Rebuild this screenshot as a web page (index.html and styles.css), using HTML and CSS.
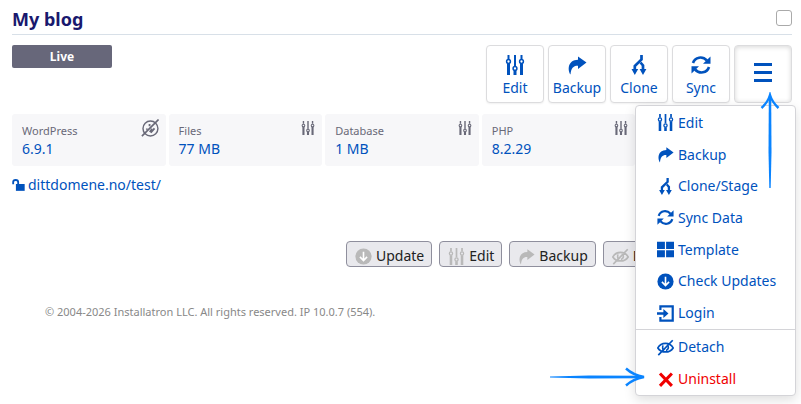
FILE: index.html
```html
<!DOCTYPE html>
<html lang="en">
<head>
  <meta charset="UTF-8">
  <title>My blog</title>
  <link rel="stylesheet" href="styles.css">
</head>
<body>

<!-- Icon set -->
<svg class="sprite" aria-hidden="true">
  <symbol id="i-sliders" viewBox="0 0 20 20">
    <path d="M3.5 0v4M10 0v11M16.5 0v4" stroke="currentColor" stroke-width="2" fill="none"/>
    <path d="M3.5 8.500v11.500M10 15.500v4.500M16.500 8.500v11.500" stroke="currentColor" stroke-width="3" fill="none"/>
    <circle cx="3.500" cy="6.500" r="1.900" fill="none" stroke="currentColor" stroke-width="1.500"/>
    <circle cx="10" cy="13.500" r="1.900" fill="none" stroke="currentColor" stroke-width="1.500"/>
    <circle cx="16.500" cy="6.500" r="1.900" fill="none" stroke="currentColor" stroke-width="1.500"/>
  </symbol>
  <symbol id="i-share" viewBox="0 0 20 20">
    <path d="M11 1.5L19.500 7.500L11 14V10.700C6.500 10.500 4 13 3.500 19.500C.5 15 .5 5 11 4.700Z" fill="currentColor"/>
  </symbol>
  <symbol id="i-clone" viewBox="0 0 20 20">
    <path d="M12.500 0V4.500L5.800 11V15" fill="none" stroke="currentColor" stroke-width="2.700"/>
    <path d="M11.500 7.500L14 10.500V15" fill="none" stroke="currentColor" stroke-width="2.700"/>
    <path d="M2.500 14H9.200L5.800 20ZM10.600 14H17.400L14 20Z" fill="currentColor"/>
  </symbol>
  <symbol id="i-sync" viewBox="0 0 20 20">
    <path d="M2 8C4 1.800 11.500 .8 16 5.500M18 12C16 18.200 8.500 19.200 4 14.500" fill="none" stroke="currentColor" stroke-width="2.600"/>
    <path d="M19.500 1.500V8.800H12ZM.5 18.500V11.200H8Z" fill="currentColor"/>
  </symbol>
  <symbol id="i-grid" viewBox="0 0 20 20">
    <path d="M0 1h9.300v8.300H0zM10.700 1H20v8.300H10.700zM0 10.800h9.300v8.300H0zM10.700 10.800H20v8.300H10.700z" fill="currentColor"/>
  </symbol>
  <symbol id="i-down" viewBox="0 0 20 20">
    <circle cx="10" cy="10" r="9.500" fill="currentColor"/>
    <path d="M10 4.500V14.500M5.800 10.500L10 14.700L14.200 10.500" fill="none" stroke="#fff" stroke-width="1.900"/>
  </symbol>
  <symbol id="i-login" viewBox="0 0 20 20">
    <path d="M4 6V1.500H18.500V18.500H4V14" fill="none" stroke="currentColor" stroke-width="2.600"/>
    <path d="M0 8.500H7.500V4.700L13.500 10L7.500 15.300V11.500H0Z" fill="currentColor"/>
  </symbol>
  <symbol id="i-hide" viewBox="0 0 20 20">
    <path d="M1 10.500C5 3.500 15 3.500 19 10.500C15 16.800 5 16.800 1 10.500ZM1.500 19L18.500 1.500" fill="none" stroke="currentColor" stroke-width="2"/>
    <path d="M7 7.500C6 11 7 12.500 8.500 13.200M13 7.800C14 11 12.500 13 10.500 13.400" fill="none" stroke="currentColor" stroke-width="1.900"/>
  </symbol>
  <symbol id="i-cross" viewBox="0 0 20 20">
    <path d="M3.500 3L17.500 17.500M17.500 3L3.500 17.500" stroke="currentColor" stroke-width="3.600"/>
  </symbol>
  <symbol id="i-unlock" viewBox="0 0 20 20">
    <path d="M6 8.500H19.500V19H6z" fill="currentColor"/>
    <path d="M1.800 9V5.500C1.800 1.200 9.500 1.200 9.500 5.500V9" fill="none" stroke="currentColor" stroke-width="2.800"/>
  </symbol>
  <symbol id="i-noupdate" viewBox="0 0 20 20">
    <circle cx="10.500" cy="10.500" r="8.300" fill="none" stroke="currentColor" stroke-width="1.600"/>
    <path d="M1 19L19.500 .5" fill="none" stroke="currentColor" stroke-width="1.800"/>
    <path d="M9.500 5.500V8M6.500 10.500V12M11.500 10.500V14.500M15 10.500L11.500 14.500L9.500 13" fill="none" stroke="currentColor" stroke-width="2"/>
  </symbol>
</svg>

<header class="site-header">
  <h1>My blog</h1>
  <input type="checkbox" class="select-box" aria-label="Select My blog">
</header>

<div class="top-row">
  <span class="badge">Live</span>
  <div class="toolbar">
    <button type="button" class="tool"><svg class="tool-icon"><use href="#i-sliders"/></svg>Edit</button>
    <button type="button" class="tool"><svg class="tool-icon"><use href="#i-share"/></svg>Backup</button>
    <button type="button" class="tool"><svg class="tool-icon"><use href="#i-clone"/></svg>Clone</button>
    <button type="button" class="tool"><svg class="tool-icon"><use href="#i-sync"/></svg>Sync</button>
    <div class="menu-wrap">
      <button type="button" class="tool tool-open" aria-label="More">
        <svg class="burger" viewBox="0 0 18 20"><path d="M0 2.500H18M0 10.500H18M0 18.500H18" stroke="currentColor" stroke-width="3"/></svg>
      </button>
      <nav class="menu">
        <div class="menu-main">
          <a href="#"><svg class="icon"><use href="#i-sliders"/></svg>Edit</a>
          <a href="#"><svg class="icon"><use href="#i-share"/></svg>Backup</a>
          <a href="#"><svg class="icon"><use href="#i-clone"/></svg>Clone/Stage</a>
          <a href="#"><svg class="icon"><use href="#i-sync"/></svg>Sync Data</a>
          <a href="#"><svg class="icon"><use href="#i-grid"/></svg>Template</a>
          <a href="#"><svg class="icon"><use href="#i-down"/></svg>Check Updates</a>
          <a href="#"><svg class="icon"><use href="#i-login"/></svg>Login</a>
        </div>
        <div class="menu-extra">
          <a href="#"><svg class="icon"><use href="#i-hide"/></svg>Detach</a>
          <a href="#" class="danger"><svg class="icon"><use href="#i-cross"/></svg>Uninstall</a>
        </div>
      </nav>
    </div>
  </div>
</div>

<div class="cards">
  <div class="card">
    <div><span class="card-label">WordPress</span><a href="#">6.9.1</a></div>
    <svg class="card-icon card-icon-lg"><use href="#i-noupdate"/></svg>
  </div>
  <div class="card">
    <div><span class="card-label">Files</span><a href="#">77 MB</a></div>
    <svg class="card-icon"><use href="#i-sliders"/></svg>
  </div>
  <div class="card">
    <div><span class="card-label">Database</span><a href="#">1 MB</a></div>
    <svg class="card-icon"><use href="#i-sliders"/></svg>
  </div>
  <div class="card">
    <div><span class="card-label">PHP</span><a href="#">8.2.29</a></div>
    <svg class="card-icon"><use href="#i-sliders"/></svg>
  </div>
</div>

<a href="#" class="site-link"><svg class="lock"><use href="#i-unlock"/></svg>dittdomene.no/test/</a>

<div class="bulk">
  <button type="button"><svg class="icon"><use href="#i-down"/></svg>Update</button>
  <button type="button"><svg class="icon"><use href="#i-sliders"/></svg>Edit</button>
  <button type="button"><svg class="icon"><use href="#i-share"/></svg>Backup</button>
  <button type="button"><svg class="icon"><use href="#i-hide"/></svg>Detach</button>
</div>

<footer>© 2004-2026 Installatron LLC. All rights reserved. IP 10.0.7 (554).</footer>

<!-- Pointer arrows -->
<svg class="arrow arrow-up" viewBox="0 0 20 98">
  <path d="M8.800 6L8.500 60L9.300 96H10.700L11.500 60L11.200 6Z" fill="#0a84ff"/>
  <path d="M1.500 16Q8 10 10 3Q12 10 18.500 16" fill="none" stroke="#0a84ff" stroke-width="2.400"/>
</svg>
<svg class="arrow arrow-right" viewBox="0 0 98 20">
  <path d="M92 8.800L40 8.500L1 9.500V10.500L40 11.500L92 11.200Z" fill="#0a84ff"/>
  <path d="M77 1.500Q84 8 95 10Q84 12 77 18.500" fill="none" stroke="#0a84ff" stroke-width="2.400"/>
</svg>

</body>
</html>
```
FILE: styles.css
```css
* {
  box-sizing: border-box;
}
body {
  min-height: 100vh;
  margin: 0;
  padding: 8px 9px 0 12px;
  background: #fff;
  color: #222;
  font-family: "Noto Sans", sans-serif;
  font-size: 14px;
  line-height: 20px;
}
a {
  color: #0052bd;
  text-decoration: none;
}
button {
  font: inherit;
  cursor: pointer;
}
.sprite {
  position: absolute;
  width: 0;
  height: 0;
}

/* Title bar */
.site-header {
  display: flex;
  align-items: flex-start;
  justify-content: space-between;
  padding-bottom: 3px;
  border-bottom: 1px solid #d8e0e8;
}
h1 {
  margin: 0;
  color: #19196e;
  font-size: 18px;
  line-height: 23px;
}
.select-box {
  appearance: none;
  width: 16px;
  height: 16px;
  margin: 2px 0 0;
  border: 1px solid #aaa;
  border-radius: 3px;
  background: #fff;
}

/* Status and actions */
.top-row {
  display: flex;
  align-items: flex-start;
  justify-content: space-between;
  margin-top: 10px;
}
.badge {
  width: 100px;
  border-radius: 2px;
  background: #67677a;
  color: #fff;
  font-size: 12px;
  font-weight: 700;
  line-height: 23px;
  text-align: center;
}
.toolbar {
  display: flex;
  gap: 4px;
}
.tool {
  display: flex;
  flex-direction: column;
  align-items: center;
  justify-content: center;
  gap: 3px;
  width: 58px;
  height: 58px;
  padding: 5px 0 0;
  border: 1px solid #dcdcde;
  border-radius: 4px;
  background: #fff;
  box-shadow: 0 1px 2px rgba(0, 0, 0, 0.06);
  color: #0052bd;
}
.tool-icon {
  width: 20px;
  height: 20px;
}
.tool-open {
  padding: 0 0 4px;
  box-shadow: inset 0 1px 5px rgba(0, 0, 0, 0.16);
}
.burger {
  width: 18px;
  height: 20px;
}
.icon {
  flex: none;
  width: 17px;
  height: 17px;
}

/* Dropdown */
.menu-wrap {
  position: relative;
}
.menu {
  position: absolute;
  top: 60px;
  right: -4px;
  z-index: 2;
  width: 161px;
  border: 1px solid #d4d4d8;
  border-radius: 4px;
  background: #fff;
  box-shadow: 0 4px 12px rgba(0, 0, 0, 0.13);
}
.menu a {
  display: flex;
  align-items: center;
  gap: 4px;
  padding-left: 21px;
}
.menu-main {
  display: grid;
  height: 223px;
  padding-top: 1px;
}
.menu-extra {
  display: grid;
  height: 66px;
  padding-top: 1px;
  border-top: 1px solid #d4d4d8;
}
.menu .danger {
  color: #f00000;
}

/* Info cards */
.cards {
  display: grid;
  grid-template-columns: repeat(5, 1fr);
  gap: 3px;
  margin-top: 11px;
}
.card {
  display: flex;
  align-items: flex-start;
  justify-content: space-between;
  padding: 8px 7px 7px 10px;
  border-radius: 3px;
  background: #f7f7f9;
}
.card-label {
  display: block;
  color: #696978;
  font-size: 11px;
  line-height: 17px;
}
.card a {
  display: block;
}
.card-icon {
  width: 14px;
  height: 14px;
  margin-top: -1px;
  color: #696978;
}
.card-icon-lg {
  width: 18px;
  height: 18px;
  margin-top: -3px;
}
.site-link {
  display: flex;
  align-items: center;
  gap: 3px;
  margin-top: 9px;
}
.lock {
  width: 13px;
  height: 14px;
}

/* Bulk actions */
.bulk {
  display: flex;
  gap: 7px;
  margin: 46px 0 0 334px;
}
.bulk button {
  display: flex;
  align-items: center;
  gap: 4px;
  height: 26px;
  padding: 4px 7px 0 8px;
  border: 1px solid #8f8f9d;
  border-radius: 4px;
  background: #e9e9ed;
  color: #222;
}
.bulk .icon {
  color: #b9b9b9;
}

footer {
  margin: 36px 0 0 33px;
  color: #888;
  font-size: 11px;
  line-height: 18px;
}

/* Arrows drawn over the page */
.arrow {
  position: absolute;
  z-index: 3;
}
.arrow-up {
  top: 92px;
  right: 21px;
  width: 20px;
  height: 98px;
}
.arrow-right {
  top: 367px;
  right: 154px;
  width: 98px;
  height: 20px;
}
```
